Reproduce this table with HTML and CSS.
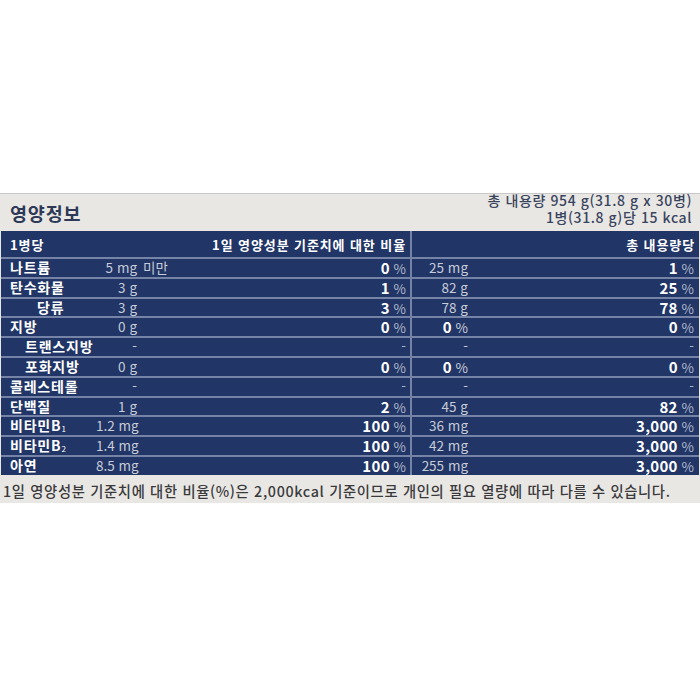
FILE: index.html
```html
<!DOCTYPE html>
<html lang="ko">
<head>
<meta charset="utf-8">
<link rel="stylesheet" href="styles.css">
</head>
<body>
<div class="label">
  <div class="head">
    <div class="title">영양정보</div>
    <div class="info">
      <div>총 내용량 954 g(31.8 g x 30병)</div>
      <div>1병(31.8 g)당 15 kcal</div>
    </div>
  </div>
  <div class="table">
    <div class="row hdr">
      <div class="left">
        <span class="name">1병당</span>
        <span class="fill"></span>
        <span class="pct">1일 영양성분 기준치에 대한 비율</span>
      </div>
      <div class="right">
        <span class="fill"></span>
        <span class="pct2">총 내용량당</span>
      </div>
    </div>

    <div class="row">
      <div class="left"><span class="name">나트륨</span><span class="amt">5 mg</span><span class="note">미만</span><span class="pct"><b>0</b> %</span></div>
      <div class="right"><span class="amt2">25 mg</span><span class="fill"></span><span class="pct2"><b>1</b> %</span></div>
    </div>
    <div class="row">
      <div class="left"><span class="name">탄수화물</span><span class="amt">3 g</span><span class="note"></span><span class="pct"><b>1</b> %</span></div>
      <div class="right"><span class="amt2">82 g</span><span class="fill"></span><span class="pct2"><b>25</b> %</span></div>
    </div>
    <div class="row">
      <div class="left"><span class="name sub2">당류</span><span class="amt">3 g</span><span class="note"></span><span class="pct"><b>3</b> %</span></div>
      <div class="right"><span class="amt2">78 g</span><span class="fill"></span><span class="pct2"><b>78</b> %</span></div>
    </div>
    <div class="row">
      <div class="left"><span class="name">지방</span><span class="amt">0 g</span><span class="note"></span><span class="pct"><b>0</b> %</span></div>
      <div class="right"><span class="amt2"><b>0</b> %</span><span class="fill"></span><span class="pct2"><b>0</b> %</span></div>
    </div>
    <div class="row">
      <div class="left"><span class="name sub">트랜스지방</span><span class="amt">-</span><span class="note"></span><span class="pct">-</span></div>
      <div class="right"><span class="amt2">-</span><span class="fill"></span><span class="pct2">-</span></div>
    </div>
    <div class="row">
      <div class="left"><span class="name sub">포화지방</span><span class="amt">0 g</span><span class="note"></span><span class="pct"><b>0</b> %</span></div>
      <div class="right"><span class="amt2"><b>0</b> %</span><span class="fill"></span><span class="pct2"><b>0</b> %</span></div>
    </div>
    <div class="row">
      <div class="left"><span class="name">콜레스테롤</span><span class="amt">-</span><span class="note"></span><span class="pct">-</span></div>
      <div class="right"><span class="amt2">-</span><span class="fill"></span><span class="pct2">-</span></div>
    </div>
    <div class="row">
      <div class="left"><span class="name">단백질</span><span class="amt">1 g</span><span class="note"></span><span class="pct"><b>2</b> %</span></div>
      <div class="right"><span class="amt2">45 g</span><span class="fill"></span><span class="pct2"><b>82</b> %</span></div>
    </div>
    <div class="row">
      <div class="left"><span class="name">비타민B<sub>1</sub></span><span class="amt">1.2 mg</span><span class="note"></span><span class="pct"><b>100</b> %</span></div>
      <div class="right"><span class="amt2">36 mg</span><span class="fill"></span><span class="pct2"><b>3,000</b> %</span></div>
    </div>
    <div class="row">
      <div class="left"><span class="name">비타민B<sub>2</sub></span><span class="amt">1.4 mg</span><span class="note"></span><span class="pct"><b>100</b> %</span></div>
      <div class="right"><span class="amt2">42 mg</span><span class="fill"></span><span class="pct2"><b>3,000</b> %</span></div>
    </div>
    <div class="row">
      <div class="left"><span class="name">아연</span><span class="amt">8.5 mg</span><span class="note"></span><span class="pct"><b>100</b> %</span></div>
      <div class="right"><span class="amt2">255 mg</span><span class="fill"></span><span class="pct2"><b>3,000</b> %</span></div>
    </div>
  </div>
  <div class="foot">1일 영양성분 기준치에 대한 비율(%)은 2,000kcal 기준이므로 개인의 필요 열량에 따라 다를 수 있습니다.</div>
</div>
</body>
</html>
```

FILE: styles.css
```css
html, body {
  margin: 0;
  padding: 0;
  background: #ffffff;
}

body {
  font-family: "Noto Sans CJK KR", "Noto Sans", sans-serif;
}

.label {
  margin-top: 193px;
  background: #e9e7e4;
  border-top: 1px solid #c9c9cb;
  padding: 0 1px 0 1px;
}

.head {
  height: 37px;
  display: flex;
  justify-content: space-between;
  align-items: center;
  padding: 0 7px 0 9px;
}

.title {
  font-size: 18.5px;
  font-weight: 700;
  color: #2d3957;
  letter-spacing: 0.8px;
}

.info {
  text-align: right;
  font-size: 14px;
  line-height: 17px;
  color: #39445e;
  font-weight: 500;
  letter-spacing: 0.6px;
  margin-top: -7px;
}

.table {
  background: #213566;
}

.row {
  display: flex;
  height: 17.8px;
  border-top: 2px solid #7584a6;
  font-size: 13.5px;
  line-height: 17.8px;
  color: #c7ccd8;
}

.row.hdr {
  border-top: none;
  height: 26px;
  line-height: 28px;
  color: #ffffff;
  font-weight: 700;
}

.row.hdr .name, .row.hdr .pct, .row.hdr .pct2 {
  color: #ffffff;
  font-weight: 700;
  font-size: 13px;
  letter-spacing: 0.9px;
}

.row.hdr .pct, .row.hdr .pct2 {
  padding-right: 4px;
}

.left {
  width: 409px;
  display: flex;
  flex-shrink: 0;
}

.right {
  flex: 1;
  display: flex;
  border-left: 2px solid #7584a6;
}

.name {
  width: 86px;
  padding-left: 9px;
  color: #ffffff;
  font-weight: 700;
  font-size: 14px;
  letter-spacing: 0.8px;
  white-space: nowrap;
}

.name.sub {
  padding-left: 24px;
  width: 71px;
}

.name.sub2 {
  padding-left: 36px;
  width: 59px;
}

.name sub {
  font-size: 8px;
  vertical-align: baseline;
  position: relative;
  top: 1px;
  font-weight: 400;
}

.amt {
  width: 41px;
  text-align: right;
  white-space: nowrap;
}

.note {
  flex: 1;
  padding-left: 6px;
}

.fill {
  flex: 1;
}

.pct, .pct2 {
  text-align: right;
  padding-right: 4px;
  white-space: nowrap;
  color: #aeb6c9;
}

.pct2 {
  padding-right: 5px;
}

.amt2 {
  width: 56px;
  text-align: right;
  white-space: nowrap;
}

b {
  color: #ffffff;
  font-weight: 700;
  font-size: 15px;
  letter-spacing: 0.3px;
}

.foot {
  height: 28px;
  line-height: 32px;
  padding-left: 2px;
  font-size: 14.3px;
  font-weight: 500;
  letter-spacing: 0.66px;
  color: #3a3a3c;
  white-space: nowrap;
}
```
